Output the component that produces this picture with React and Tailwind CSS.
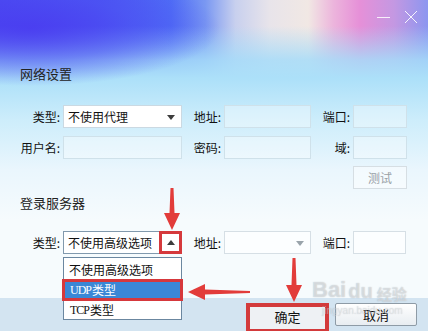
export default function App() {
  const label = "flex items-center justify-end pr-[3px] leading-none";
  const box = "h-[23px] border border-[#cfe1ea] bg-white/35";
  return (
    <div className="relative w-[428px] h-[331px] overflow-hidden flex flex-col font-['Noto_Sans_CJK_SC',sans-serif] text-[12px] text-[#111] [background:radial-gradient(ellipse_190px_58px_at_30px_28px,rgba(74,62,240,0.9)_0%,rgba(76,80,242,0.55)_55%,rgba(80,90,244,0)_100%),linear-gradient(180deg,rgba(170,222,250,0)_0px,rgba(170,222,250,0)_26px,rgba(166,220,249,0.85)_60px,#ace0f9_78px,#cdedfb_120px,#eaf6fd_170px,#f6fbfd_220px),linear-gradient(90deg,#4a3ef0_0%,#4b52f3_22%,#4f6ff6_40%,#7a98f2_48%,#c8d0ee_55%,#e8e4ea_63%,#f1e8e4_72%,#ecb4dc_78%,#e690d8_84%,#c498e2_92%,#8c96f0_100%)]">
      {/* title bar */}
      <div className="h-[65px] shrink-0 flex justify-end items-start pt-[10px] pr-[10px] gap-[13px]">
        <svg width="14" height="14" viewBox="0 0 14 14">
          <line x1="0" y1="7.5" x2="13" y2="7.5" stroke="white" strokeOpacity="0.85" />
        </svg>
        <svg width="14" height="14" viewBox="0 0 14 14">
          <path d="M1 1L13 13M13 1L1 13" stroke="white" strokeOpacity="0.9" />
        </svg>
      </div>

      <div className="pl-[20px] h-[18px] leading-[18px] text-[13px] text-[#222]">网络设置</div>

      <div className="mt-[22px] grid grid-cols-[63px_119px_42px_87px_42px_54px] h-[23px]">
        <div className={label}>类型:</div>
        <div className="relative h-[23px] border border-[#cbd9e2] bg-white flex items-center pl-[4px] leading-none">
          不使用代理
          <svg className="absolute right-[6px] top-[9px]" width="8" height="5" viewBox="0 0 8 5">
            <path d="M0 0H8L4 5Z" fill="#3c3c3c" />
          </svg>
        </div>
        <div className={label}>地址:</div>
        <div className={box} />
        <div className={label}>端口:</div>
        <div className={box} />
      </div>

      <div className="mt-[8px] grid grid-cols-[63px_119px_42px_87px_42px_54px] h-[23px]">
        <div className={label}>用户名:</div>
        <div className={box} />
        <div className={label}>密码:</div>
        <div className={box} />
        <div className={label}>域:</div>
        <div className={box} />
      </div>

      <div className="mt-[7px] grid grid-cols-[353px_54px] h-[23px]">
        <div />
        <div className="h-[23px] border border-[#d6dee3] bg-white/45 flex items-center justify-center text-[#9aa1a7] leading-none">测试</div>
      </div>

      <div className="mt-[5px] pl-[20px] h-[18px] leading-[18px] text-[13px] text-[#222]">登录服务器</div>

      <div className="mt-[19px] grid grid-cols-[63px_119px_42px_87px_42px_53px] h-[23px]">
        <div className={label}>类型:</div>
        <div className="relative h-[23px] border border-[#8199ad] bg-white flex items-center pl-[4px] leading-none">
          不使用高级选项
          <div className="absolute -top-px -right-px -bottom-px w-[23px] border-[3px] border-[#d5393c] bg-white flex items-center justify-center">
            <svg width="8" height="5" viewBox="0 0 8 5">
              <path d="M0 5H8L4 0Z" fill="#3c3c3c" />
            </svg>
          </div>
          <div className="absolute z-10 left-[-1px] top-[25px] w-[119px] h-[63px] border border-[#6b87a0] bg-white flex flex-col leading-none">
            <div className="h-[21px] flex items-center pl-[5px] pt-[2px]">不使用高级选项</div>
            <div className="h-[22px] mx-[-2px] border-[3px] border-[#d6383c] bg-[#3a87d6] text-white flex items-center pl-[5px]">
              <span className="font-['Liberation_Serif'] tracking-[-1px] mr-[1px]">UDP</span>类型
            </div>
            <div className="flex-1 flex items-center pl-[6px]">
              <span className="font-['Liberation_Serif'] tracking-[-1px] mr-[1px]">TCP</span>类型
            </div>
          </div>
        </div>
        <div className={label}>地址:</div>
        <div className="relative h-[23px] border border-[#d6dfe5] bg-white/70">
          <svg className="absolute right-[6px] top-[9px]" width="8" height="5" viewBox="0 0 8 5">
            <path d="M0 0H8L4 5Z" fill="#9aa4ab" />
          </svg>
        </div>
        <div className={label}>端口:</div>
        <div className="h-[23px] border border-[#d6dfe5] bg-white/70" />
      </div>

      <div className="mt-auto h-[33px] shrink-0 bg-[#d3e4f1] flex justify-end items-start pt-[5px] pr-[11px] gap-[6px]">
        <div className="w-[83px] h-[30px] border-[4px] border-[#d33a3b] bg-[#eef1f4] flex items-center justify-center pb-[4px] text-[13px] leading-none">确定</div>
        <div className="w-[82px] h-[23px] border border-[#8e9ba6] rounded-[2px] bg-gradient-to-b from-white to-[#e8edf1] flex items-center justify-center text-[13px] leading-none">取消</div>
      </div>

      {/* watermark */}
      <div className="absolute left-[312px] top-[279px] flex items-end gap-[2px] text-white/45 [text-shadow:0_0_1px_rgba(110,120,130,0.5)] leading-none">
        <span className="font-['Liberation_Sans'] font-bold text-[22px]">Bai</span>
        <span className="font-['Liberation_Sans'] font-bold text-[20px]">du</span>
        <span className="text-[15px] font-bold ml-[2px]">经验</span>
      </div>
      <div className="absolute left-[322px] top-[306px] text-[10px] font-['Liberation_Sans'] text-white/35 [text-shadow:0_0_1px_rgba(110,120,130,0.4)] leading-none">jingyan.baidu.com</div>

      {/* red arrows */}
      <svg className="absolute left-[163px] top-[188px]" width="18" height="42" viewBox="0 0 18 42">
        <polygon points="7.5,0 10.5,0 11.5,25 17,25 9,42 1,25 6.5,25" fill="#e23c3a" />
      </svg>
      <svg className="absolute left-[285px] top-[258px]" width="18" height="44" viewBox="0 0 18 44">
        <polygon points="7.5,0 10.5,0 11.5,27 17,27 9,44 1,27 6.5,27" fill="#e23c3a" />
      </svg>
      <svg className="absolute z-20 left-[188px] top-[283px]" width="63" height="18" viewBox="0 0 63 18">
        <polygon points="0,9 17,1 17,6.5 62,8 62,10 17,11.5 17,17" fill="#e23c3a" />
      </svg>
    </div>
  );
}
